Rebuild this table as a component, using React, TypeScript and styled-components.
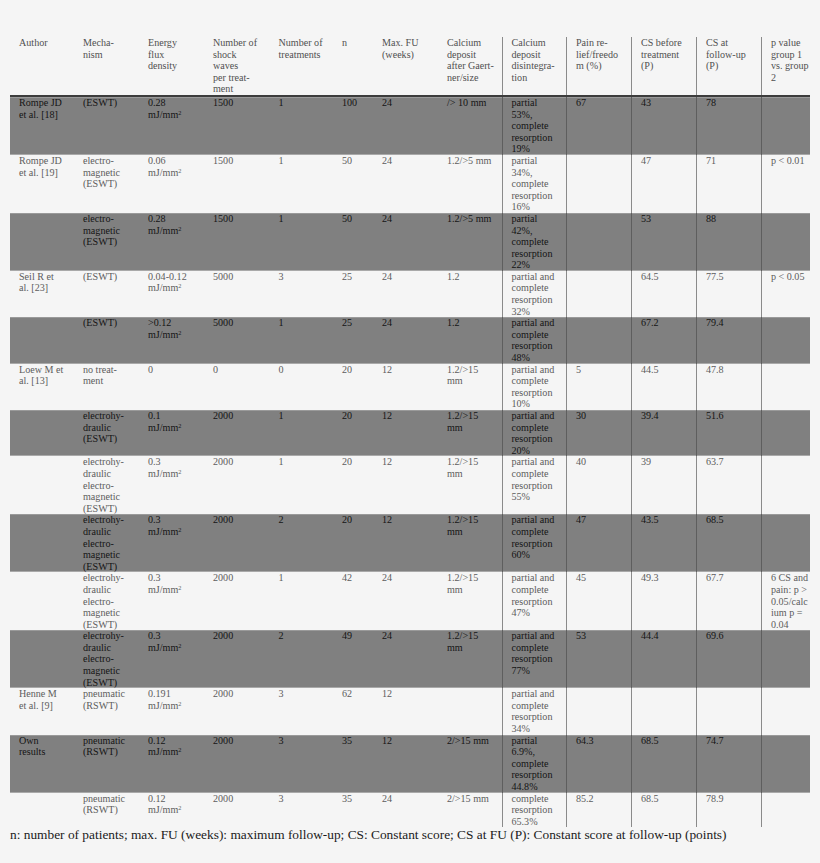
import React from "react";
import styled, { createGlobalStyle } from "styled-components";

const Global = createGlobalStyle`
  html, body { margin: 0; padding: 0; background: #f5f5f5; }
  body { font-family: "Liberation Serif", "Times New Roman", serif; }
`;

const COLS = "64px 65px 65px 65.5px 65.5px 37px 66px 64.5px 64.5px 65px 65px 65px 48px";

const Page = styled.div`
  width: 820px;
  height: 863px;
  box-sizing: border-box;
  padding: 37px 10px 0 10px;
  background: #f5f5f5;
  overflow: hidden;
`;

const Table = styled.div`
  display: flex;
  flex-direction: column;
  width: 800px;
`;

const Row = styled.div<{ $shade?: boolean; $head?: boolean }>`
  display: grid;
  grid-template-columns: ${COLS};
  background: ${(p) => (p.$shade ? "#808080" : "transparent")};
  color: ${(p) => (p.$shade ? "#141414" : p.$head ? "#505050" : "#5c5c5c")};
  border-bottom: ${(p) => (p.$head ? "2px solid #3c3c3c" : "0")};
  box-shadow: ${(p) => (p.$shade ? "inset 0 -1px 0 #a9a9a9, inset 0 1px 0 #9a9a9a" : "none")};
`;

const Cell = styled.div<{ $line?: boolean; $shade?: boolean; $pad?: number }>`
  box-sizing: border-box;
  padding-left: ${(p) => p.$pad ?? 9}px;
  font-size: 10.1px;
  line-height: 11.6px;
  white-space: nowrap;
  border-left: ${(p) =>
    p.$line ? `1px solid ${p.$shade ? "#5e5e5e" : "#8a8a8a"}` : "0"};
  ${(p) => (p.$line ? "margin-left: -1px;" : "")}
`;

const Line = styled.div``;

const Sup = styled.sup`
  font-size: 0.62em;
  line-height: 0;
  vertical-align: 0.45em;
`;

const Footer = styled.div`
  font-size: 13.36px;
  line-height: 15px;
  color: #1a1a1a;
  white-space: nowrap;
`;

type C = string[];
const MJ = "__MJ__";

const header: C[] = [
  ["Author"],
  ["Mecha-", "nism"],
  ["Energy", "flux", "density"],
  ["Number of", "shock", "waves", "per treat-", "ment"],
  ["Number of", "treatments"],
  ["n"],
  ["Max. FU", "(weeks)"],
  ["Calcium", "deposit", "after Gaert-", "ner/size"],
  ["Calcium", "deposit", "disintegra-", "tion"],
  ["Pain re-", "lief/freedo", "m (%)"],
  ["CS before", "treatment", "(P)"],
  ["CS at", "follow-up", "(P)"],
  ["p value", "group 1", "vs. group", "2"],
];

const ehd = ["electrohy-", "draulic", "electro-", "magnetic", "(ESWT)"];
const pac = (v: string) => ["partial and", "complete", "resorption", v];

const rows: { shade: boolean; cells: C[] }[] = [
  {
    shade: true,
    cells: [["Rompe JD", "et al. [18]"], ["(ESWT)"], ["0.28", MJ], ["1500"], ["1"], ["100"], ["24"], ["/> 10 mm"],
      ["partial", "53%,", "complete", "resorption", "19%"], ["67"], ["43"], ["78"], []],
  },
  {
    shade: false,
    cells: [["Rompe JD", "et al. [19]"], ["electro-", "magnetic", "(ESWT)"], ["0.06", MJ], ["1500"], ["1"], ["50"], ["24"], ["1.2/>5 mm"],
      ["partial", "34%,", "complete", "resorption", "16%"], [], ["47"], ["71"], ["p < 0.01"]],
  },
  {
    shade: true,
    cells: [[], ["electro-", "magnetic", "(ESWT)"], ["0.28", MJ], ["1500"], ["1"], ["50"], ["24"], ["1.2/>5 mm"],
      ["partial", "42%,", "complete", "resorption", "22%"], [], ["53"], ["88"], []],
  },
  {
    shade: false,
    cells: [["Seil R et", "al. [23]"], ["(ESWT)"], ["0.04-0.12", MJ], ["5000"], ["3"], ["25"], ["24"], ["1.2"],
      pac("32%"), [], ["64.5"], ["77.5"], ["p < 0.05"]],
  },
  {
    shade: true,
    cells: [[], ["(ESWT)"], [">0.12", MJ], ["5000"], ["1"], ["25"], ["24"], ["1.2"],
      pac("48%"), [], ["67.2"], ["79.4"], []],
  },
  {
    shade: false,
    cells: [["Loew M et", "al. [13]"], ["no treat-", "ment"], ["0"], ["0"], ["0"], ["20"], ["12"], ["1.2/>15", "mm"],
      pac("10%"), ["5"], ["44.5"], ["47.8"], []],
  },
  {
    shade: true,
    cells: [[], ["electrohy-", "draulic", "(ESWT)"], ["0.1", MJ], ["2000"], ["1"], ["20"], ["12"], ["1.2/>15", "mm"],
      pac("20%"), ["30"], ["39.4"], ["51.6"], []],
  },
  {
    shade: false,
    cells: [[], ehd, ["0.3", MJ], ["2000"], ["1"], ["20"], ["12"], ["1.2/>15", "mm"],
      pac("55%"), ["40"], ["39"], ["63.7"], []],
  },
  {
    shade: true,
    cells: [[], ehd, ["0.3", MJ], ["2000"], ["2"], ["20"], ["12"], ["1.2/>15", "mm"],
      pac("60%"), ["47"], ["43.5"], ["68.5"], []],
  },
  {
    shade: false,
    cells: [[], ehd, ["0.3", MJ], ["2000"], ["1"], ["42"], ["24"], ["1.2/>15", "mm"],
      pac("47%"), ["45"], ["49.3"], ["67.7"], ["6 CS and", "pain: p >", "0.05/calc", "ium p =", "0.04"]],
  },
  {
    shade: true,
    cells: [[], ehd, ["0.3", MJ], ["2000"], ["2"], ["49"], ["24"], ["1.2/>15", "mm"],
      pac("77%"), ["53"], ["44.4"], ["69.6"], []],
  },
  {
    shade: false,
    cells: [["Henne M", "et al. [9]"], ["pneumatic", "(RSWT)"], ["0.191", MJ], ["2000"], ["3"], ["62"], ["12"], [],
      pac("34%"), [], [], [], []],
  },
  {
    shade: true,
    cells: [["Own", "results"], ["pneumatic", "(RSWT)"], ["0.12", MJ], ["2000"], ["3"], ["35"], ["12"], ["2/>15 mm"],
      ["partial", "6.9%,", "complete", "resorption", "44.8%"], ["64.3"], ["68.5"], ["74.7"], []],
  },
  {
    shade: false,
    cells: [[], ["pneumatic", "(RSWT)"], ["0.12", MJ], ["2000"], ["3"], ["35"], ["24"], ["2/>15 mm"],
      ["complete", "resorption", "65.3%"], ["85.2"], ["68.5"], ["78.9"], []],
  },
];

const LINED = new Set([8, 9, 10, 11, 12]);
const padFor = (i: number) => (i === 5 ? 7 : i === 6 ? 10 : 9);

const renderLines = (lines: C) =>
  lines.map((l, k) =>
    l === MJ ? (
      <Line key={k}>
        mJ/mm<Sup>2</Sup>
      </Line>
    ) : (
      <Line key={k}>{l}</Line>
    )
  );

export default function App() {
  return (
    <Page>
      <Global />
      <Table>
        <Row $head>
          {header.map((c, i) => (
            <Cell key={i} $line={LINED.has(i)} $pad={padFor(i)}>
              {renderLines(c)}
            </Cell>
          ))}
        </Row>
        {rows.map((r, ri) => (
          <Row key={ri} $shade={r.shade}>
            {r.cells.map((c, i) => (
              <Cell key={i} $line={LINED.has(i)} $shade={r.shade} $pad={padFor(i)}>
                {renderLines(c)}
              </Cell>
            ))}
          </Row>
        ))}
      </Table>
      <Footer>
        n: number of patients; max. FU (weeks): maximum follow-up; CS: Constant score; CS at FU (P): Constant score at follow-up (points)
      </Footer>
    </Page>
  );
}
